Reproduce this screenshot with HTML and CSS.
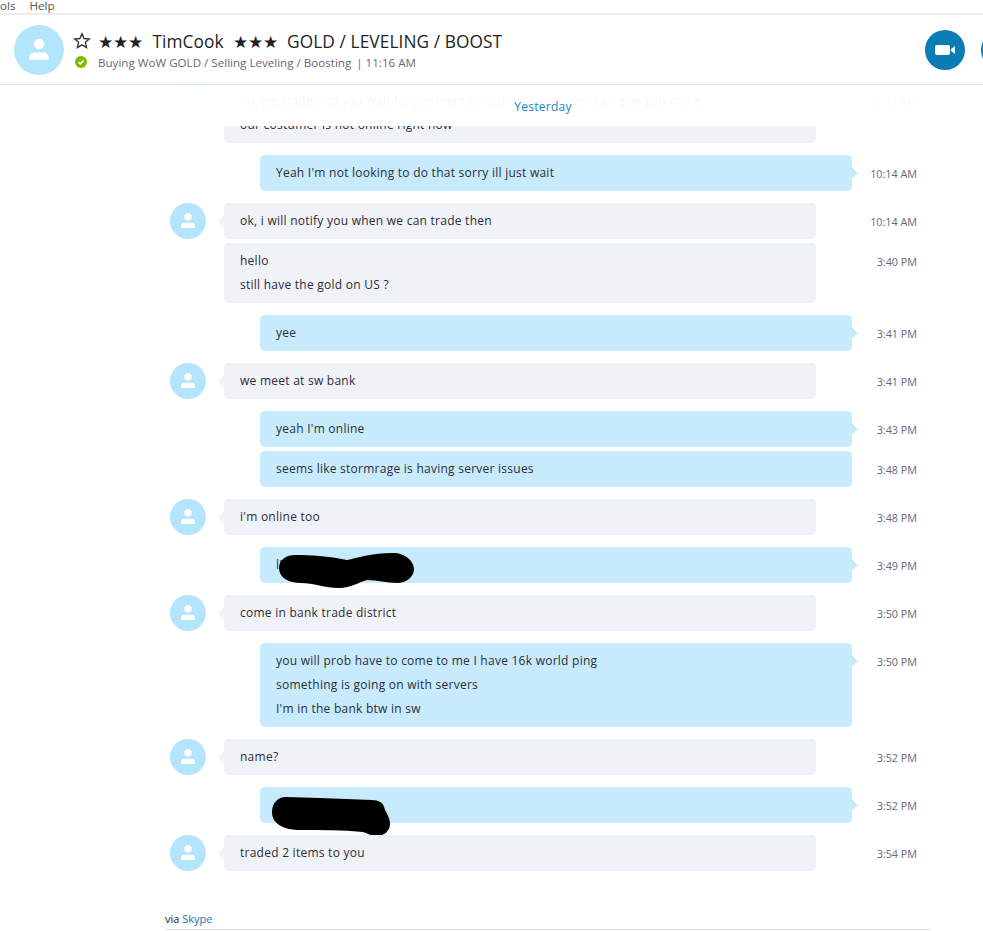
FILE: index.html
```html
<!DOCTYPE html>
<html lang="en">
<head>
  <meta charset="UTF-8">
  <title>Skype conversation</title>
  <link rel="stylesheet" href="styles.css">
</head>
<body>
  <!-- shared person icon -->
  <svg class="sprite">
    <symbol id="person" viewBox="0 0 36 36">
      <circle cx="18" cy="13.700" r="3.800"/>
      <path d="M11 25v-1.500c0-2.400 2-3.700 4-3.700h6c2 0 4 1.300 4 3.700V25z"/>
    </symbol>
  </svg>

  <nav class="menubar">
    <span class="menu-tools">ools</span>
    <span>Help</span>
  </nav>

  <header class="chat-header">
    <div class="avatar avatar-big"><svg><use href="#person"/></svg></div>
    <div class="header-info">
      <div class="header-title">
        <svg class="fav" viewBox="0 0 16 16"><path d="M8 1.500l1.900 4.300 4.600.4-3.500 3 1.100 4.600L8 11.400l-4.100 2.400L5 9.200l-3.500-3 4.600-.4z"/></svg>
        <span class="title-text">★★★&nbsp; TimCook &nbsp;★★★&nbsp; GOLD / LEVELING / BOOST</span>
      </div>
      <div class="header-status">
        <svg class="presence" viewBox="0 0 12 12"><circle cx="6" cy="6" r="6"/><path d="M3.500 6.200l1.800 1.700 3.200-3.300"/></svg>
        <span>Buying WoW GOLD / Selling Leveling / Boosting<span class="sep">|</span>11:16 AM</span>
      </div>
    </div>
    <div class="call-buttons">
      <div class="call-btn">
        <svg viewBox="0 0 40 40"><rect x="10" y="15" width="15" height="10" rx="2"/><path d="M26 19l4-3v8l-4-3z"/></svg>
      </div>
      <div class="call-btn"></div>
    </div>
  </header>

  <main class="chat">
    <div class="date-band"><span>Yesterday</span></div>

    <div class="messages">
      <div class="group">
        <div class="row in">
          <div class="avatar"><svg><use href="#person"/></svg></div>
          <div class="bubble"><p>no, we trade and you wait for payment arround 4 hours, so i can give you more</p><p>our costumer is not online right now</p></div>
          <time>10:12 AM</time>
        </div>
      </div>

      <div class="group">
        <div class="row out">
          <div class="bubble"><p>Yeah I'm not looking to do that sorry ill just wait</p></div>
          <time>10:14 AM</time>
        </div>
      </div>

      <div class="group">
        <div class="row in">
          <div class="avatar"><svg><use href="#person"/></svg></div>
          <div class="bubble"><p>ok, i will notify you when we can trade then</p></div>
          <time>10:14 AM</time>
        </div>
        <div class="row in cont">
          <div class="bubble"><p>hello</p><p>still have the gold on US ?</p></div>
          <time>3:40 PM</time>
        </div>
      </div>

      <div class="group">
        <div class="row out">
          <div class="bubble"><p>yee</p></div>
          <time>3:41 PM</time>
        </div>
      </div>

      <div class="group">
        <div class="row in">
          <div class="avatar"><svg><use href="#person"/></svg></div>
          <div class="bubble"><p>we meet at sw bank</p></div>
          <time>3:41 PM</time>
        </div>
      </div>

      <div class="group">
        <div class="row out">
          <div class="bubble"><p>yeah I'm online</p></div>
          <time>3:43 PM</time>
        </div>
        <div class="row out cont">
          <div class="bubble"><p>seems like stormrage is having server issues</p></div>
          <time>3:48 PM</time>
        </div>
      </div>

      <div class="group">
        <div class="row in">
          <div class="avatar"><svg><use href="#person"/></svg></div>
          <div class="bubble"><p>i'm online too</p></div>
          <time>3:48 PM</time>
        </div>
      </div>

      <div class="group">
        <div class="row out">
          <div class="bubble">
            <p>l'</p>
            <svg class="scribble scribble-a" viewBox="0 0 135 35"><path d="M0 15C0 6 8 2 16 2c14 0 34 1 52 5 10-2 24-7 46-7 12 0 21 8 21 16 0 8-8 14-17 14-10 0-20-3-30-3-8 2-16 8-28 8-14 0-26-5-38-5C10 30 0 25 0 15z"/></svg>
          </div>
          <time>3:49 PM</time>
        </div>
      </div>

      <div class="group">
        <div class="row in">
          <div class="avatar"><svg><use href="#person"/></svg></div>
          <div class="bubble"><p>come in bank trade district</p></div>
          <time>3:50 PM</time>
        </div>
      </div>

      <div class="group">
        <div class="row out">
          <div class="bubble"><p>you will prob have to come to me I have 16k world ping</p><p>something is going on with servers</p><p>I'm in the bank btw in sw</p></div>
          <time>3:50 PM</time>
        </div>
      </div>

      <div class="group">
        <div class="row in">
          <div class="avatar"><svg><use href="#person"/></svg></div>
          <div class="bubble"><p>name?</p></div>
          <time>3:52 PM</time>
        </div>
      </div>

      <div class="group">
        <div class="row out">
          <div class="bubble">
            <svg class="scribble scribble-b" viewBox="0 0 118 39"><path d="M0 15C0 6 6 0 14 0c12 0 22 1 34 1l52 2c7 0 11 3 12 7 2 6 6 10 6 17 0 7-6 12-13 12-6 0-10-3-14-4-21-2-43-2-63-2C12 33 0 27 0 15z"/></svg>
          </div>
          <time>3:52 PM</time>
        </div>
      </div>

      <div class="group">
        <div class="row in">
          <div class="avatar"><svg><use href="#person"/></svg></div>
          <div class="bubble"><p>traded 2 items to you</p></div>
          <time>3:54 PM</time>
        </div>
      </div>
    </div>

    <footer class="via">via <a href="#">Skype</a></footer>
  </main>
</body>
</html>
```

FILE: styles.css
```css
html, body {
  margin: 0;
  padding: 0;
}

body {
  width: 983px;
  height: 931px;
  overflow: hidden;
  background: #fff;
  color: #2f2b38;
  font-family: 'Open Sans', 'Noto Sans', sans-serif;
  font-size: 12px;
}

p {
  margin: 0;
}

.sprite {
  display: none;
}

.menubar {
  height: 13px;
  display: flex;
  gap: 14px;
  border-bottom: 2px solid #eeeeee;
  font-size: 11.6px;
  line-height: 11px;
  color: #555;
}

.menu-tools {
  margin-left: -7px;
}

.chat-header {
  height: 69px;
  display: flex;
  align-items: center;
  padding-left: 14px;
  border-bottom: 1px solid #d6e4ee;
  position: relative;
  z-index: 3;
  background: #fff;
}

.avatar {
  width: 36px;
  height: 36px;
  border-radius: 50%;
  background: #b3e5fc;
  flex: none;
}

.avatar svg {
  display: block;
  width: 100%;
  height: 100%;
  fill: #fff;
}

.avatar-big {
  width: 50px;
  height: 50px;
}

.header-info {
  margin-left: 10px;
  flex: 1;
  align-self: flex-start;
  padding-top: 14px;
}

.header-title {
  display: flex;
  align-items: center;
  height: 24px;
  font-size: 17.3px;
  letter-spacing: 0.08px;
  color: #222;
}

.fav {
  width: 18px;
  height: 18px;
  margin: 0 7px 0 -1px;
  fill: none;
  stroke: #333;
  stroke-width: 1.2;
}

.header-status {
  display: flex;
  align-items: center;
  height: 20px;
  margin-top: -1px;
  font-size: 11.6px;
  color: #6a6578;
}

.sep {
  margin: 0 3px 0 5px;
}

.presence {
  width: 12px;
  height: 12px;
  margin: 0 11px 0 1px;
}

.presence circle {
  fill: #7fba00;
}

.presence path {
  fill: none;
  stroke: #fff;
  stroke-width: 1.6;
}

.call-buttons {
  display: flex;
  gap: 16px;
  width: 58px;
  overflow: hidden;
  flex: none;
}

.call-btn {
  width: 40px;
  height: 40px;
  border-radius: 50%;
  background: #0a7db5;
  flex: none;
}

.call-btn svg {
  display: block;
  fill: #fff;
}

.chat {
  position: relative;
  height: 846px;
  overflow: hidden;
}

.date-band {
  position: absolute;
  top: 0;
  left: 0;
  right: 0;
  height: 41px;
  background: rgba(255, 255, 255, 0.96);
  z-index: 2;
  text-align: center;
  line-height: 44px;
  letter-spacing: 0.25px;
  color: #1a86c0;
  padding-left: 103px;
  box-sizing: border-box;
}

.messages {
  display: flex;
  flex-direction: column;
  gap: 12px;
  margin-top: -2px;
  padding-left: 170px;
}

.group {
  display: flex;
  flex-direction: column;
  gap: 4px;
}

.row {
  display: grid;
  width: 747px;
  position: relative;
}

.row.in {
  grid-template-columns: 54px 592px 1fr;
}

.row.out {
  grid-template-columns: 90px 592px 1fr;
}

.row .bubble {
  grid-column: 2;
  position: relative;
  padding: 6px 16px;
  min-height: 24px;
  border-radius: 5px;
  line-height: 24px;
  letter-spacing: 0.25px;
}

.row.in .bubble {
  background: #eff2f7;
}

.row.out .bubble {
  background: #c7ebfc;
}

/* little notch on the first bubble of a group */
.row:not(.cont) .bubble::after {
  content: "";
  position: absolute;
  top: 14px;
  width: 8px;
  height: 8px;
  transform: rotate(45deg);
  border-radius: 1px;
}

.row.in .bubble::after {
  left: -4px;
  background: #eff2f7;
}

.row.out .bubble::after {
  right: -4px;
  background: #c7ebfc;
}

.row time {
  grid-column: 3;
  text-align: right;
  font-size: 10.8px;
  line-height: 16px;
  margin-top: 11px;
  color: #6a6578;
}

.scribble {
  position: absolute;
  fill: #000;
}

.scribble-a {
  left: 19px;
  top: 6px;
  width: 135px;
  height: 35px;
}

.scribble-b {
  left: 12px;
  top: 10px;
  width: 118px;
  height: 39px;
}

.via {
  position: absolute;
  left: 165px;
  width: 766px;
  bottom: 1px;
  height: 18px;
  line-height: 16px;
  font-size: 11px;
  border-bottom: 1px solid #d6dee6;
  color: #222;
}

.via a {
  color: #0a7db5;
  text-decoration: none;
}
```
